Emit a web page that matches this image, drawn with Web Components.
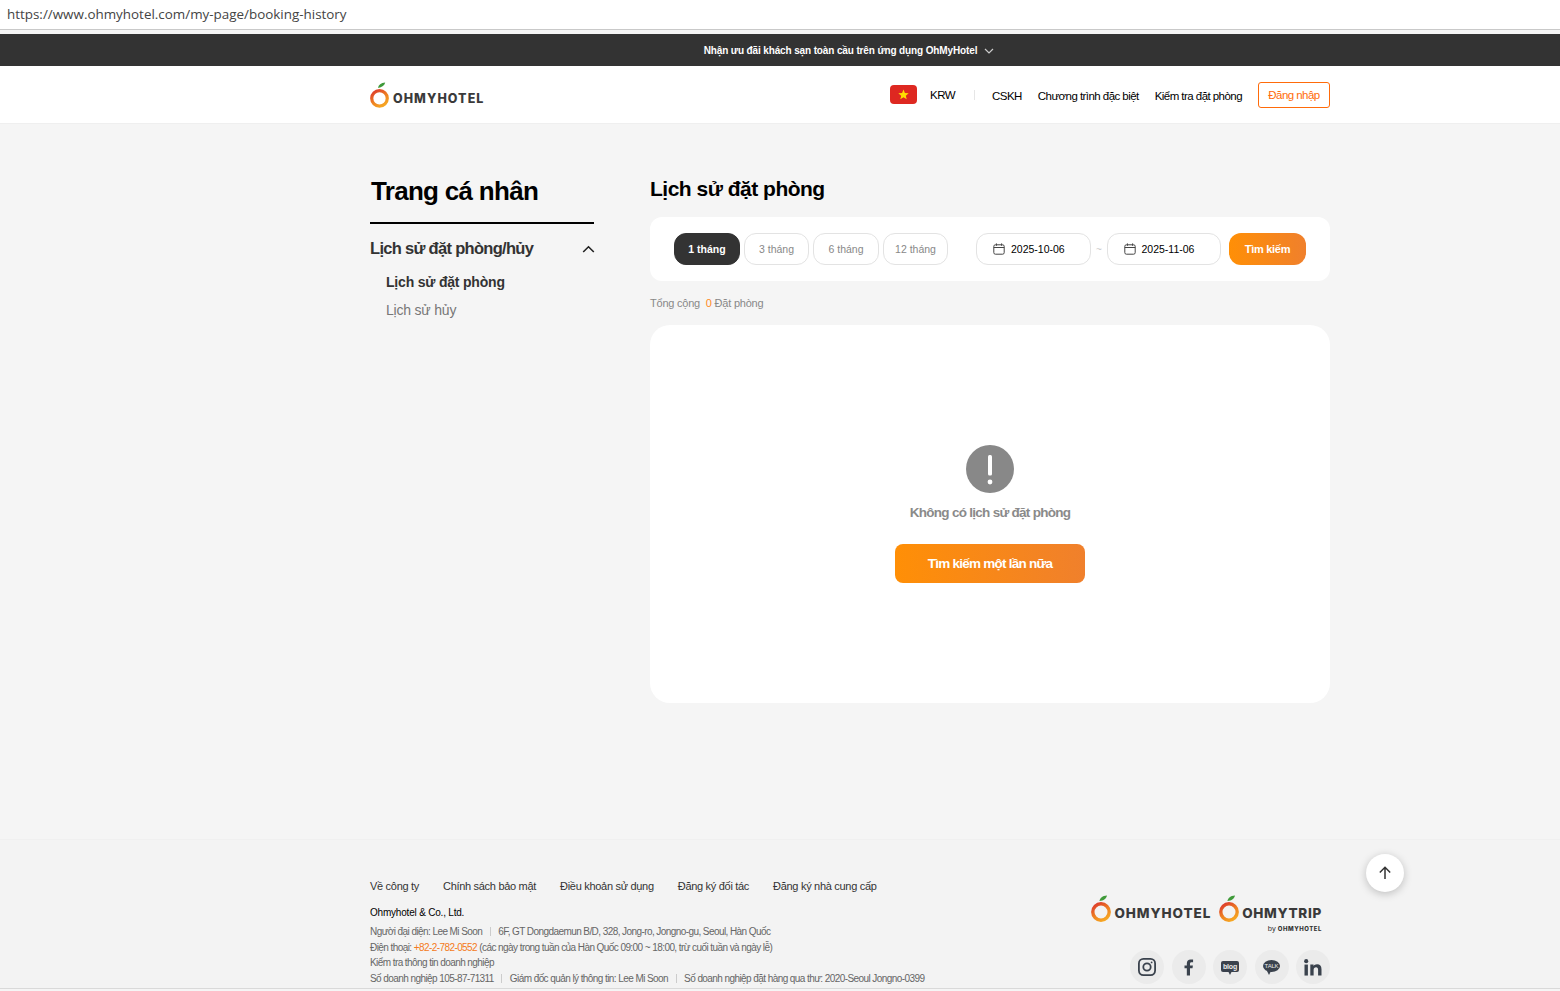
<!DOCTYPE html>
<html lang="vi"><head><meta charset="utf-8"><title>OhMyHotel</title>
<style>
html,body{margin:0;padding:0;height:991px;overflow:hidden;background:#f5f5f5}
body{font-family:"Liberation Sans",Arial,sans-serif;display:flex;flex-direction:column;position:relative}
</style></head><body>
<url-strip>https://www.ohmyhotel.com/my-page/booking-history</url-strip>
<promo-bar>Nhận ưu đãi khách sạn toàn cầu trên ứng dụng OhMyHotel</promo-bar>
<site-header></site-header>
<page-main>
  <side-nav slot="side"></side-nav>
  <booking-history slot="content"></booking-history>
</page-main>
<site-footer></site-footer>
<top-button></top-button>
<script>
const LOGO_MARK=(s)=>`<svg width="${s}" height="${Math.round(s*27/20)}" viewBox="0 0 20 27" aria-hidden="true"><defs><linearGradient id="og" x1="0.1" y1="0" x2="0.7" y2="1"><stop offset="0" stop-color="#dc3a2c"/><stop offset=".55" stop-color="#ee7f22"/><stop offset="1" stop-color="#f6a623"/></linearGradient></defs><path d="M8.400 6C9 2.800 11.400.8 16 .4 15.400 3.200 12.800 5.600 8.400 6Z" fill="#3f9a3a"/><circle cx="10" cy="17" r="8.200" fill="none" stroke="url(#og)" stroke-width="3.400"/></svg>`;
function def(name,html){customElements.define(name,class extends HTMLElement{constructor(){super();this.attachShadow({mode:'open'}).innerHTML=typeof html==='function'?html(this):html;}});}

def('url-strip',`<style>:host{display:block;height:29px;background:#fff;border-bottom:1px solid #c9c9c9;font:13.42px/29px "Open Sans",sans-serif;color:#444;padding-left:7px;margin-bottom:4px;box-shadow:0 4px 0 #f5f5f5}</style><slot></slot>`);

def('promo-bar',`<style>:host{display:flex;height:32px;background:#333;color:#fff;align-items:center;justify-content:center;font-size:10px;font-weight:700;letter-spacing:-.13px;gap:7px;padding-left:138px}svg{display:block;margin-top:1px}</style><slot></slot><svg width="10" height="6" viewBox="0 0 10 6" fill="none" stroke="#ccc" stroke-width="1.2"><path d="M1 1l4 4 4-4"/></svg>`);

def('oh-logo',(h)=>`<style>:host{display:inline-flex;align-items:flex-end;gap:var(--g,4px);--c:#3a3a3a}span{font:800 var(--fs,12.5px)/1 Inter,sans-serif;color:var(--c);letter-spacing:var(--ls,1.05px);padding-bottom:var(--pb,3px);display:block}</style>${LOGO_MARK(+h.getAttribute('size')||20)}<span>${h.getAttribute('text')||'OHMYHOTEL'}</span>`);

def('site-header',`<style>:host{display:block;height:58px;background:#fff;border-bottom:1px solid #efefef;box-sizing:border-box}
.w{width:960px;margin-left:370px;height:57px;display:flex;align-items:center;justify-content:space-between}
nav{display:flex;align-items:center;font-size:11.5px;color:#000;letter-spacing:-.55px}
.flag{width:27px;height:19px;border-radius:4px;background:#de2821;display:flex;align-items:center;justify-content:center;margin-right:13px}
.sep{width:1px;height:10px;background:#e6e6e6;margin:0 17px 0 19px}
a{margin-right:16px;padding-top:2px}
.login{height:26px;width:72px;box-sizing:border-box;border:1px solid #ff6b0a;border-radius:3px;color:#ff6b0a;display:flex;align-items:center;justify-content:center;margin:0}
oh-logo{margin-top:1px}
</style><div class="w"><oh-logo size="19"></oh-logo><nav>
<span class="flag"><svg width="11" height="11" viewBox="0 0 24 24"><path fill="#ffde00" d="M12 1l3.100 7.600 8.200.6-6.300 5.300 2 8-7-4.300-7 4.300 2-8L.7 9.200l8.200-.6z"/></svg></span>
<span>KRW</span><span class="sep"></span><a>CSKH</a><a>Chương trình đặc biệt</a><a>Kiểm tra đặt phòng</a><span class="login">Đăng nhập</span></nav></div>`);

def('page-main',`<style>:host{display:block;height:715px;background:#f5f5f5}
.w{width:960px;margin-left:370px;display:grid;grid-template-columns:224px 680px;column-gap:56px}</style>
<div class="w"><slot name="side"></slot><slot name="content"></slot></div>`);

def('side-nav',`<style>:host{display:block;padding-top:52px}
h1{margin:0 0 0 1px;font-size:26px;line-height:31px;font-weight:700;color:#000;height:46px;letter-spacing:-.7px}
.rule{height:2px;background:#000}
.g{display:flex;justify-content:space-between;align-items:center;margin-top:14px;font-size:16.5px;line-height:20px;font-weight:700;color:#333;letter-spacing:-.7px}
svg{display:block;margin:2px -1px 0 0}
ul{list-style:none;margin:14px 0 0;padding:0 0 0 16px;font-size:14px;line-height:20px;letter-spacing:-.2px}
li{margin-bottom:8px;color:#777}li.on{font-weight:700;color:#333}
</style><h1>Trang cá nhân</h1><div class="rule"></div>
<div class="g"><span>Lịch sử đặt phòng/hủy</span><svg width="13" height="8" viewBox="0 0 13 8" fill="none" stroke="#222" stroke-width="1.6"><path d="M1.200 7L6.500 1.800 11.800 7"/></svg></div>
<ul><li class="on">Lịch sử đặt phòng</li><li>Lịch sử hủy</li></ul>`);

const CAL=`<svg width="12" height="12" viewBox="0 0 12 12" fill="none" stroke="#444" stroke-width="1"><rect x=".8" y="1.800" width="10.400" height="9.400" rx="1.600"/><path d="M.8 4.500h10.400M3.400.4v2.400M8.600.4v2.400"/></svg>`;
def('booking-history',`<style>:host{display:block;padding-top:52px}
h2{margin:0;font-size:21px;line-height:26px;font-weight:700;color:#000;letter-spacing:-.5px}
.bar{margin-top:15px;height:64px;background:#fff;border-radius:12px;display:flex;align-items:center;padding-left:24px;box-sizing:border-box}
.t{height:32px;border:1px solid #e3e3e3;border-radius:12px;box-sizing:border-box;display:flex;align-items:center;justify-content:center;font-size:10.5px;color:#888;margin-right:4px;width:65px}
.t.on{background:#333;border-color:#333;color:#fff;font-weight:700;width:66px}
.d{height:32px;border:1px solid #e3e3e3;border-radius:12px;box-sizing:border-box;display:flex;align-items:center;font-size:10.5px;color:#000;gap:6px;padding-left:16px;width:115px}
.til{width:16px;text-align:center;color:#ccc;font-size:10px}
.s{margin-left:8px;width:77px;height:32px;border-radius:12px;background:linear-gradient(90deg,#ff8f06,#f0802c);color:#fff;font-size:11px;font-weight:700;display:flex;align-items:center;justify-content:center;letter-spacing:-.3px}
.c{margin-top:16px;height:12px;line-height:12px;font-size:11px;color:#888;letter-spacing:-.22px}.c b{font-weight:400;color:#ff8a1e;margin-left:3px}
.e{margin-top:16px;height:378px;background:#fff;border-radius:20px;display:flex;flex-direction:column;align-items:center;padding-top:120px;box-sizing:border-box}
.m{font-size:13.5px;font-weight:700;color:#8a8a8a;line-height:16px;margin-top:12px;letter-spacing:-.72px}
.b{margin-top:23px;width:190px;height:39px;border-radius:8px;background:linear-gradient(90deg,#ff8f06,#f0802c);color:#fff;font-size:13.5px;font-weight:700;display:flex;align-items:center;justify-content:center;letter-spacing:-.75px}
svg{display:block}
</style><h2>Lịch sử đặt phòng</h2>
<div class="bar"><span class="t on">1 tháng</span><span class="t">3 tháng</span><span class="t" style="width:66px">6 tháng</span><span class="t" style="margin-right:28px">12 tháng</span>
<span class="d">${CAL}2025-10-06</span><span class="til">~</span><span class="d" style="width:114px;gap:5.500px">${CAL}2025-11-06</span><span class="s">Tìm kiếm</span></div>
<div class="c">Tổng cộng <b>0</b> Đặt phòng</div>
<div class="e"><svg width="48" height="48" viewBox="0 0 48 48"><circle cx="24" cy="24" r="24" fill="#888"/><rect x="22" y="10" width="4" height="20.500" rx="1.500" fill="#fff"/><circle cx="24" cy="37" r="2.400" fill="#fff"/></svg>
<div class="m">Không có lịch sử đặt phòng</div><div class="b">Tìm kiếm một lần nữa</div></div>`);

const IG=`<svg width="18" height="18" viewBox="0 0 18 18" fill="none" stroke="#3a424d" stroke-width="1.800"><rect x=".9" y=".9" width="16.200" height="16.200" rx="4.500"/><circle cx="9" cy="9" r="3.700"/><circle cx="13.600" cy="4.400" r=".9" fill="#3a424d" stroke="none"/></svg>`;
const FB=`<svg width="10" height="17" viewBox="0 0 12 20" preserveAspectRatio="none"><path fill="#3a424d" d="M3.400 19.500V11H.6V7.600h2.800V5.200C3.400 2 5.200.5 8 .5c1.200 0 2.400.1 2.900.2v3H9.100c-1.400 0-1.900.8-1.900 1.800v2.100h3.500L10.200 11H7.200v8.500z"/></svg>`;
const BLOG=`<span class="ic" style="--bw:18px;--bh:11px;--r:2px"><span class="tx" style="font-weight:700;font-size:7px">blog</span><i></i></span>`;
const TALK=`<span class="ic" style="--bw:17px;--bh:12px;--r:50%"><span class="tx">TALK</span><i style="left:4px"></i></span>`;
const IN=`<svg width="18" height="17" viewBox="0 0 20 19"><g fill="#3a424d"><rect x=".5" y="6.200" width="3.800" height="12.300"/><circle cx="2.400" cy="2.400" r="2.300"/><path d="M7 6.200h3.600v1.700c.7-1.200 2.100-2 3.900-2 3.300 0 5 2 5 5.600v7H15.700v-6.300c0-1.800-.7-2.900-2.300-2.900-1.700 0-2.700 1.100-2.700 3v6.200H7z"/></g></svg>`;
def('site-footer',`<style>:host{display:block;height:150px;background:#f3f3f3;border-bottom:1px solid #d9d9d9;box-sizing:border-box;border-top:1px solid #f0f0f0}
.w{width:960px;margin-left:370px;display:flex;justify-content:space-between;height:100%}
.l{padding-top:40px;color:#666;font-size:10px;letter-spacing:-.575px}
.links{display:flex;gap:24px;font-size:11px;color:#333;letter-spacing:-.3px;line-height:13px}
.co{color:#000;margin-top:13px;line-height:14px;letter-spacing:-.2px}
.row{line-height:15.7px;white-space:nowrap}.co + .row{margin-top:4px}
.o{color:#f47a20}.p{display:inline-block;width:1px;height:9px;background:#ccc;margin:0 7.500px;vertical-align:-1px}
.r{display:flex;flex-direction:column;align-items:flex-end;padding-top:55px;box-sizing:border-box;height:100%}
.logos{display:flex;gap:8px;margin-right:8px;align-items:flex-start}
.trip{display:flex;flex-direction:column;align-items:flex-end}
.by{font-size:7.500px;color:#333;margin-top:2px;letter-spacing:0;display:flex;gap:2px;align-items:baseline}
.by b{font:800 6px Inter,sans-serif;letter-spacing:.55px}
.sns{display:flex;gap:7.500px;margin-top:auto;padding-bottom:4px}
.sns>span{width:34px;height:34px;border-radius:50%;background:#ebebeb;display:flex;align-items:center;justify-content:center}
.ic{position:relative;width:var(--bw);height:var(--bh);background:#3a424d;border-radius:var(--r);display:flex;align-items:center;justify-content:center;margin-top:-2px}
.ic .tx{color:#ebebeb;font-size:6px;line-height:1;letter-spacing:-.2px}
.ic i{position:absolute;left:7px;bottom:-3px;width:0;height:0;border-left:2px solid transparent;border-right:2px solid transparent;border-top:4px solid #3a424d}
svg{display:block}
</style><div class="w"><div class="l"><div class="links"><span>Về công ty</span><span>Chính sách bảo mật</span><span>Điều khoản sử dụng</span><span>Đăng ký đối tác</span><span>Đăng ký nhà cung cấp</span></div>
<div class="co">Ohmyhotel &amp; Co., Ltd.</div>
<div class="row">Người đại diện: Lee Mi Soon<span class="p"></span>6F, GT Dongdaemun B/D, 328, Jong-ro, Jongno-gu, Seoul, Hàn Quốc</div>
<div class="row">Điện thoại: <span class="o">+82-2-782-0552</span> (các ngày trong tuần của Hàn Quốc 09:00 ~ 18:00, trừ cuối tuần và ngày lễ)</div>
<div class="row">Kiểm tra thông tin doanh nghiệp</div>
<div class="row">Số doanh nghiệp 105-87-71311<span class="p"></span>Giám đốc quản lý thông tin: Lee Mi Soon<span class="p"></span>Số doanh nghiệp đặt hàng qua thư: 2020-Seoul Jongno-0399</div></div>
<div class="r"><div class="logos"><oh-logo size="20" style="--fs:13.500px;--ls:.9px;--pb:2px;--g:4px"></oh-logo><div class="trip"><oh-logo size="20" text="OHMYTRIP" style="--fs:13.500px;--ls:.7px;--pb:2px;--g:3px"></oh-logo><div class="by">by <b>OHMYHOTEL</b></div></div></div>
<div class="sns"><span>${IG}</span><span>${FB}</span><span>${BLOG}</span><span>${TALK}</span><span>${IN}</span></div></div></div>`);

def('top-button',`<style>:host{position:absolute;left:1366px;top:854px;width:38px;height:38px;border-radius:50%;background:#fff;box-shadow:0 2px 8px rgba(0,0,0,.22);display:flex;align-items:center;justify-content:center}</style><svg width="14" height="14" viewBox="0 0 14 14" fill="none" stroke="#333" stroke-width="1.500"><path d="M7 13V1.500M1.800 6.500L7 1.300l5.200 5.200"/></svg>`);
</script></body></html>
